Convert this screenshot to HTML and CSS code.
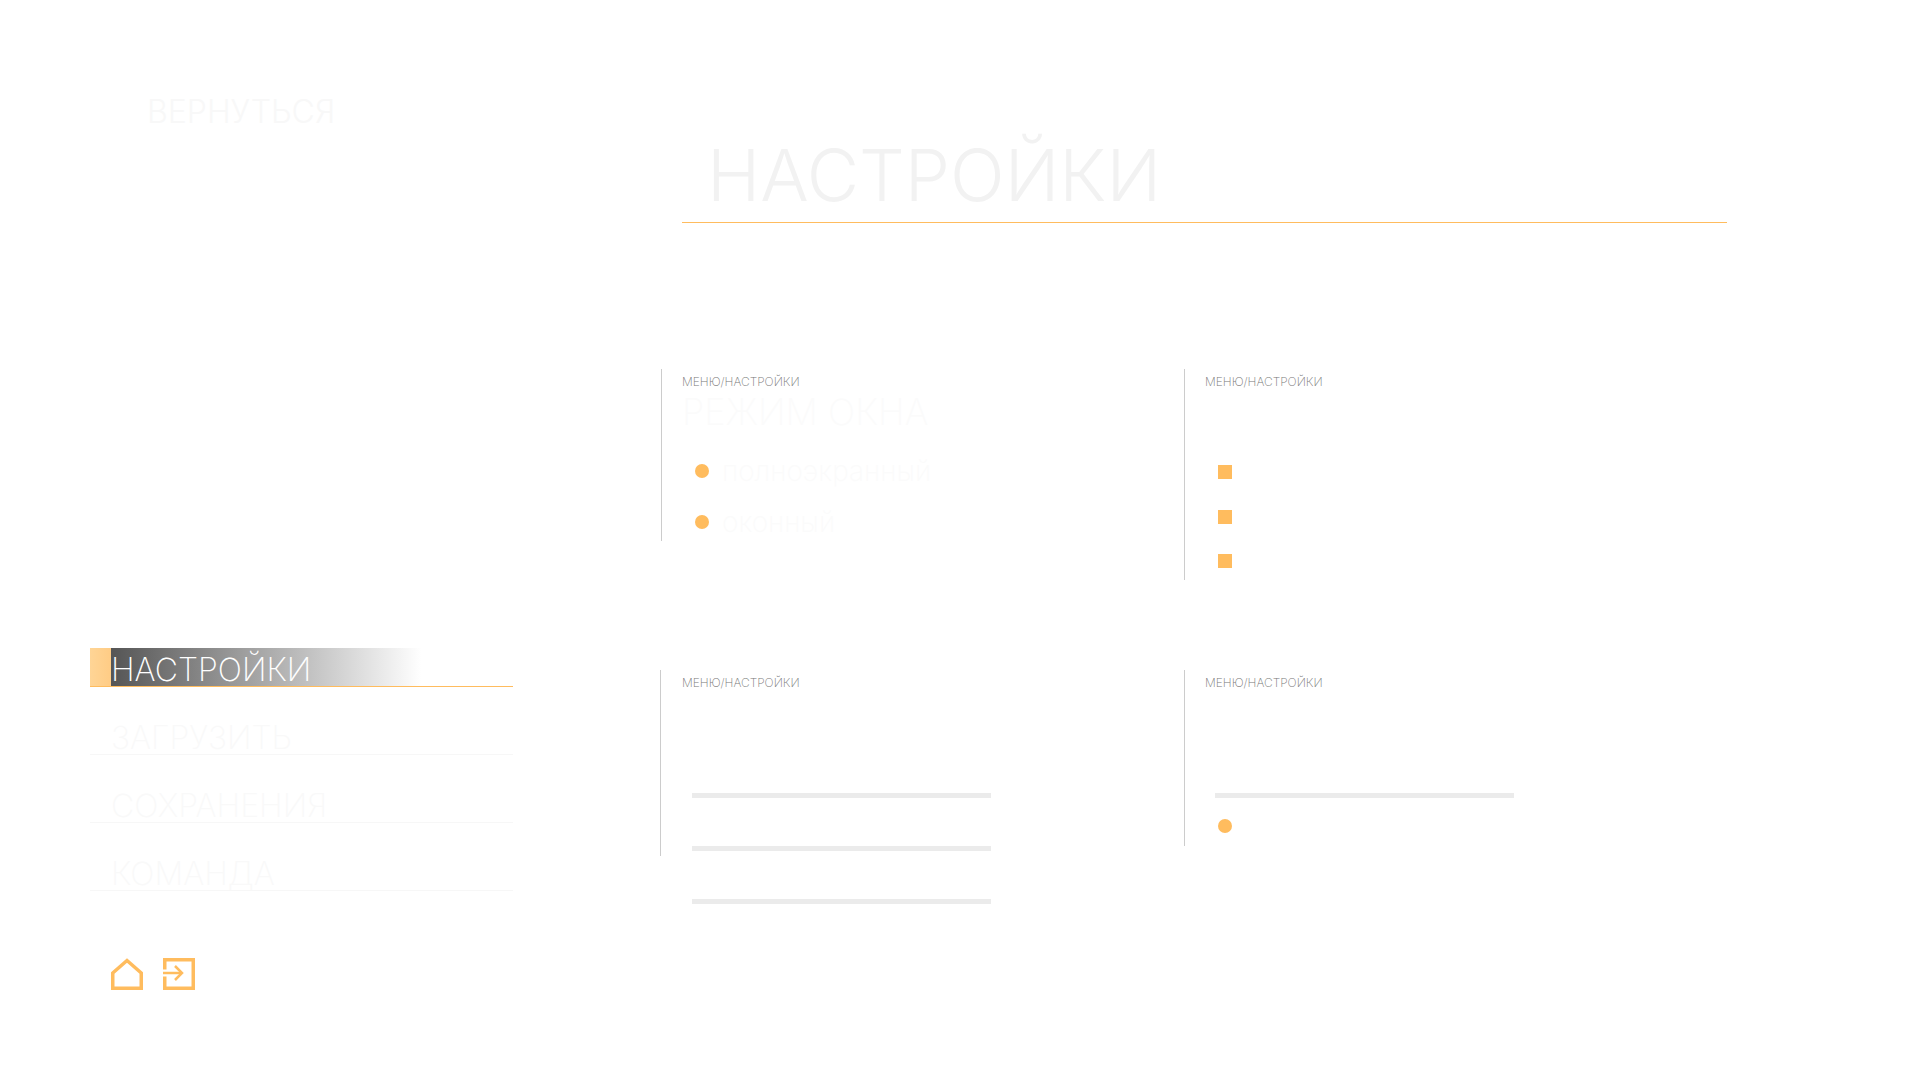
FILE: index.html
```html
<!DOCTYPE html>
<html lang="ru">
<head>
  <meta charset="UTF-8">
  <title>Настройки</title>
  <link rel="stylesheet" href="styles.css">
</head>
<body>
  <div class="page">
    <aside class="sidebar">
      <a class="back">ВЕРНУТЬСЯ</a>
      <nav class="menu">
        <a class="menu-item active"><span class="menu-mark"></span><span class="menu-label">НАСТРОЙКИ</span></a>
        <a class="menu-item"><span class="menu-label">ЗАГРУЗИТЬ</span></a>
        <a class="menu-item"><span class="menu-label">СОХРАНЕНИЯ</span></a>
        <a class="menu-item"><span class="menu-label">КОМАНДА</span></a>
      </nav>
      <div class="tools">
        <svg class="tool" viewBox="0 0 32 32" fill="none" stroke="#ffbc5e" stroke-width="3.5">
          <path d="M1.75 30.25V15L16 2.5L30.25 15V30.25Z"/>
        </svg>
        <svg class="tool" viewBox="0 0 32 32" fill="none">
          <rect x="1.75" y="1.75" width="28.5" height="28.5" stroke="#ffbc5e" stroke-width="3.5"/>
          <path d="M0 15H6" stroke="#fff" stroke-width="7"/>
          <path d="M0 15H19" stroke="#ffbc5e" stroke-width="2.5"/>
          <path d="M12 8L19 15L12 22" stroke="#ffbc5e" stroke-width="2.5"/>
        </svg>
      </div>
    </aside>

    <main class="content">
      <h1 class="title">НАСТРОЙКИ</h1>
      <div class="panels">
        <section class="panel panel-mode">
          <div class="crumb">МЕНЮ/НАСТРОЙКИ</div>
          <h2 class="panel-title">РЕЖИМ ОКНА</h2>
          <ul class="options">
            <li class="option"><span class="dot"></span>полноэкранный</li>
            <li class="option"><span class="dot"></span>оконный</li>
          </ul>
        </section>

        <section class="panel panel-checks">
          <div class="crumb">МЕНЮ/НАСТРОЙКИ</div>
          <div class="checks">
            <span class="check"></span>
            <span class="check"></span>
            <span class="check"></span>
          </div>
        </section>

        <section class="panel panel-sound">
          <div class="crumb">МЕНЮ/НАСТРОЙКИ</div>
          <div class="sliders">
            <div class="slider"></div>
            <div class="slider"></div>
            <div class="slider"></div>
          </div>
        </section>

        <section class="panel panel-other">
          <div class="crumb">МЕНЮ/НАСТРОЙКИ</div>
          <div class="sliders">
            <div class="slider"></div>
          </div>
          <span class="dot dot-other"></span>
        </section>
      </div>
    </main>
  </div>
</body>
</html>
```

FILE: styles.css
```css
* {
  box-sizing: border-box;
}
body {
  margin: 0;
  background: #fff;
  font-family: Inter, "Liberation Sans", sans-serif;
  font-weight: 300;
}
.page {
  display: flex;
  height: 1080px;
  overflow: hidden;
}

/* sidebar */
.sidebar {
  width: 423px;
  margin-left: 90px;
  padding-top: 92px;
}
.back {
  display: block;
  padding-left: 57px;
  font-size: 32px;
  line-height: 40px;
  color: #f8f8f8;
}
.menu {
  display: flex;
  flex-direction: column;
  gap: 29px;
  margin-top: 516px;
}
.menu-item {
  display: flex;
  height: 39px;
  font-size: 32px;
  font-weight: 200;
  line-height: 43px;
  color: #f9f9f9;
  border-bottom: 1px solid #f7f7f7;
}
.menu-label {
  padding-left: 21px;
}
.menu-item.active {
  color: #fff;
  border-bottom-color: #ffbc5e;
}
.menu-item.active .menu-label {
  width: 310px;
  padding-left: 0;
  background: linear-gradient(90deg, #555 0%, #fff 100%);
}
.menu-mark {
  width: 21px;
  background: linear-gradient(90deg, #ffd596, #ffcc85);
}
.tools {
  display: flex;
  gap: 20px;
  margin: 67px 0 0 21px;
}
.tool {
  width: 32px;
  height: 32px;
}

/* main part */
.content {
  margin-left: 147px;
  padding-top: 132px;
}
.title {
  width: 1045px;
  margin: 0 0 0 22px;
  padding: 0 0 4px 25px;
  font-size: 72px;
  font-weight: 340;
  line-height: 86px;
  color: #f2f2f2;
  border-bottom: 1px solid #ffbc5e;
}
.panels {
  display: grid;
  grid-template-columns: 524px 524px;
  grid-template-rows: 301px 200px;
  margin-top: 146px;
}
.panel {
  padding: 5px 0 0 20px;
  border-left: 1px solid #ccc;
}
.panel-mode {
  height: 172px;
  margin-left: 1px;
}
.panel-checks {
  height: 211px;
}
.panel-sound {
  height: 186px;
  padding-left: 21px;
}
.panel-other {
  height: 176px;
}
.crumb {
  font-size: 12px;
  font-weight: 200;
  line-height: 16px;
  color: #777;
}
.panel-title {
  margin: 0;
  font-size: 36px;
  font-weight: 200;
  line-height: 44px;
  color: #fbfbfb;
}
.options {
  list-style: none;
  margin: 11px 0 0;
  padding: 0;
}
.option {
  display: flex;
  align-items: center;
  gap: 13px;
  height: 51px;
  padding-left: 13px;
  font-size: 28px;
  font-weight: 200;
  color: #fbfbfb;
}
.dot {
  width: 14px;
  height: 14px;
  border-radius: 50%;
  background: #ffbc5e;
}
.checks {
  display: flex;
  flex-direction: column;
  gap: 30.5px;
  margin: 75px 0 0 13px;
}
.check {
  width: 14px;
  height: 14px;
  background: #ffbc5e;
}
.sliders {
  display: flex;
  flex-direction: column;
  gap: 48px;
  margin: 102px 0 0 10px;
}
.slider {
  width: 299px;
  height: 5px;
  background: #ebebeb;
}
.dot-other {
  display: block;
  margin: 21px 0 0 13px;
}
```
